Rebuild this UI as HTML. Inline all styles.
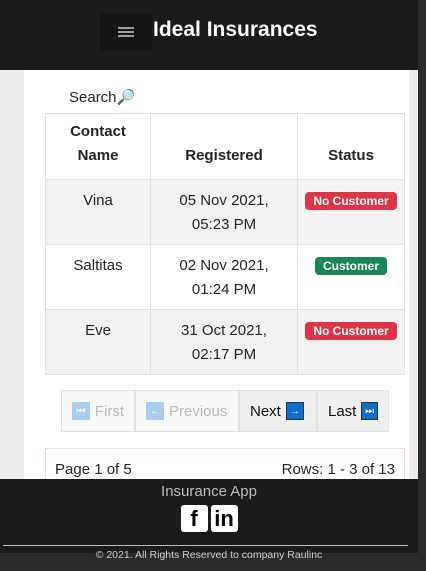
<!DOCTYPE html><html><head><style>
*{box-sizing:border-box;margin:0;padding:0}
body{width:426px;height:571px;overflow:hidden;background:#2b2b2e;font-family:"Liberation Sans",sans-serif;position:relative;color:#212529}
.hdr{position:absolute;left:0;top:0;width:418px;height:70px;background:#1b1b1b}
.burger{position:absolute;left:100px;top:14px;width:52px;height:36px;background:#141414}
.burger i{position:absolute;left:18px;width:16px;height:2px;background:#9a9a9a}
.title{position:absolute;left:153px;top:18px;color:#fff;font-weight:bold;font-size:21px}
.main{position:absolute;left:0;top:70px;width:418px;height:409px;background:#ececec}
.card{position:absolute;left:24px;top:0;width:385px;height:409px;background:#fff}
.search{position:absolute;left:69px;top:88px;font-size:15px}
table{position:absolute;left:45px;top:113px;width:360px;border-collapse:collapse;font-size:15px;text-align:center}
td,th{border:1px solid #dee2e6;vertical-align:top;padding:0}
th{height:66px;vertical-align:bottom;padding-bottom:11px;line-height:24px}
td{height:65px;padding-top:9px;line-height:24px}
tr.g td{background:#f2f2f2}
.b{display:inline-block;color:#fff;font-weight:bold;font-size:12px;padding:1px 8px;border-radius:4px;line-height:16px;margin-top:1px}
.r{background:#dc3545}.gr{background:#198754}
.pg{position:absolute;left:61px;top:390px;height:42px;display:flex;font-size:15px}
.pg div{border:1px solid #dee2e6;display:flex;align-items:center;padding:0 10px;gap:5px}
.dis{color:#b8bcc0;background:#f8f8f8}
.act{background:#efefef;color:#111}
.ic{width:18px;height:18px;display:inline-flex;align-items:center;justify-content:center;font-size:10px;color:#fff}
.info{position:absolute;left:45px;top:448px;width:360px;height:40px;border:1px solid #f8d7da;font-size:15px;padding:12px 9px}
.ftr{position:absolute;left:0;top:479px;width:418px;height:74px;background:#1b1b1b;text-align:center;color:#bbb}
.soc{display:flex;justify-content:center;gap:3px;margin-top:5px}
.soc span{width:27px;height:27px;background:#fff;border-radius:3px;color:#000;font-weight:bold;font-size:22px;line-height:27px}
.hr{position:absolute;left:3px;top:66px;width:405px;height:1px;background:#bbb}
.cp{position:absolute;left:0;top:70px;width:418px;font-size:10.5px;color:#ccc}
</style></head><body>
<div class="hdr"><div class="burger"><i style="top:13px"></i><i style="top:17px"></i><i style="top:21px"></i></div><div class="title">Ideal Insurances</div></div>
<div class="main"><div class="card"></div></div>
<div class="search">Search<span style="color:#4a9ad8">&#128270;</span></div>
<table>
<tr><th style="width:105px">Contact<br>Name</th><th style="width:147px">Registered</th><th>Status</th></tr>
<tr class="g"><td>Vina</td><td>05 Nov 2021,<br>05:23 PM</td><td><span class="b r">No Customer</span></td></tr>
<tr><td>Saltitas</td><td>02 Nov 2021,<br>01:24 PM</td><td><span class="b gr">Customer</span></td></tr>
<tr class="g"><td>Eve</td><td>31 Oct 2021,<br>02:17 PM</td><td><span class="b r">No Customer</span></td></tr>
</table>
<div class="pg">
<div class="dis" style="width:74px"><span class="ic" style="background:#a9cdee">⏮</span>First</div>
<div class="dis" style="width:104px"><span class="ic" style="background:#a9cdee">←</span>Previous</div>
<div class="act" style="width:78px">Next <span class="ic" style="background:#0a6fd0;border:1px solid #333">→</span></div>
<div class="act" style="width:72px">Last <span class="ic" style="background:#0a6fd0;border:1px solid #333">⏭</span></div>
</div>
<div class="info"><span>Page 1 of 5</span><span style="float:right">Rows: 1 - 3 of 13</span></div>
<div class="ftr"><div style="font-size:15px;padding-top:4px">Insurance App</div>
<div class="soc"><span>f</span><span>in</span></div>
<div class="hr"></div><div class="cp">© 2021. All Rights Reserved to company Raulinc</div></div>
</body></html>
